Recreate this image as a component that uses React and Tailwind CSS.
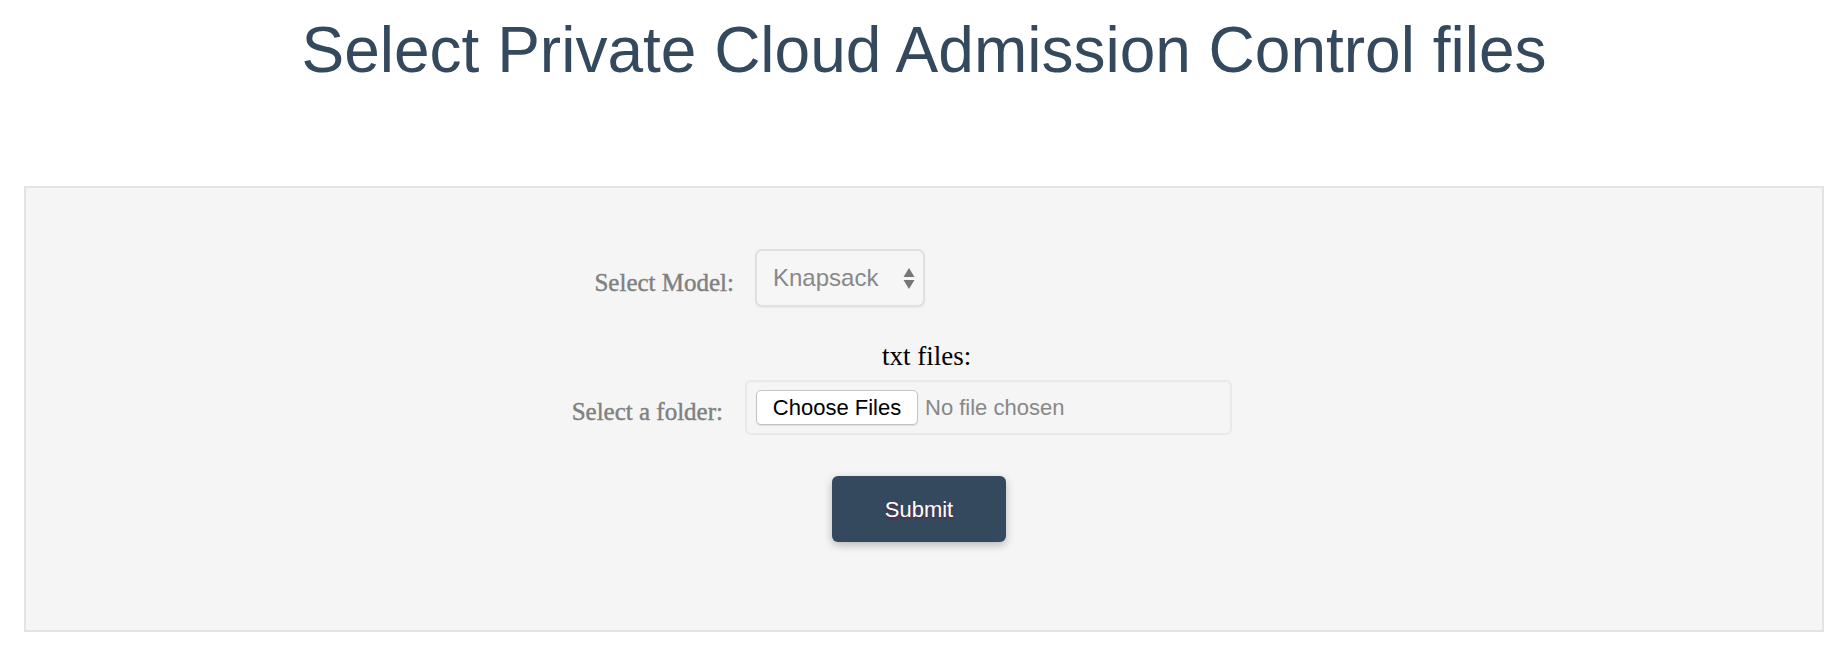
export default function App() {
  return (
    <div className="min-h-[658px] bg-white pl-[24px] pr-[6px]">
      <h1 className="pt-[10px] text-center text-[64px] leading-[80px] text-[#34495e] font-['Liberation_Sans',Arial,sans-serif]">
        Select Private Cloud Admission Control files
      </h1>

      <div className="mt-[96px] h-[446px] border-2 border-[#e3e3e3] bg-[#f5f5f5] pt-[61px]">
        {/* model row */}
        <div className="flex items-start">
          <label className="mt-[19px] w-[708px] text-right text-[25px] leading-[30px] text-[#808080] [-webkit-text-stroke:0.4px_#808080] font-['Liberation_Serif',Georgia,serif]">
            Select Model:
          </label>
          <div className="relative ml-[21px] flex h-[58px] w-[170px] items-center rounded-[7px] border-2 border-[#e0e0e0] bg-[#f6f6f6] pl-[16px] shadow-[0_1px_2px_rgba(0,0,0,0.05)]">
            <span className="text-[24px] text-[#888] font-['Liberation_Sans',Arial,sans-serif]">Knapsack</span>
            <svg className="absolute right-[8px] top-[17px]" width="12" height="21" viewBox="0 0 12 21">
              <path d="M6 0 L11.5 9 L0.5 9 Z" fill="#777" />
              <path d="M0.5 12 L11.5 12 L6 21 Z" fill="#777" />
            </svg>
          </div>
        </div>

        {/* folder row */}
        <div className="mt-[34px] ml-[856px] text-[27px] leading-[30px] text-black font-['Liberation_Serif',Georgia,serif]">
          txt files:
        </div>
        <div className="mt-[9px] flex items-start">
          <label className="mt-[17px] w-[697px] text-right text-[25px] leading-[30px] text-[#808080] [-webkit-text-stroke:0.4px_#808080] font-['Liberation_Serif',Georgia,serif]">
            Select a folder:
          </label>
          <div className="ml-[22px] flex h-[55px] w-[487px] items-center rounded-[6px] border-2 border-[#ece8ea] pl-[9px]">
            <button className="h-[35px] w-[162px] rounded-[5px] border border-[#c4c4c4] bg-white text-[22px] text-black font-['Liberation_Sans',Arial,sans-serif] shadow-[0_1px_1px_rgba(0,0,0,0.1)]">
              Choose Files
            </button>
            <span className="ml-[7px] text-[22px] text-[#888] font-['Liberation_Sans',Arial,sans-serif]">No file chosen</span>
          </div>
        </div>

        {/* submit */}
        <div className="mt-[41px] flex">
          <button className="ml-[806px] h-[66px] w-[174px] rounded-[6px] bg-[#34495e] text-[22px] text-white font-['Liberation_Sans',Arial,sans-serif] shadow-[0_3px_8px_rgba(0,0,0,0.25)] [text-shadow:0_2px_2px_rgba(120,20,40,0.6)]">
            Submit
          </button>
        </div>
      </div>
    </div>
  );
}
